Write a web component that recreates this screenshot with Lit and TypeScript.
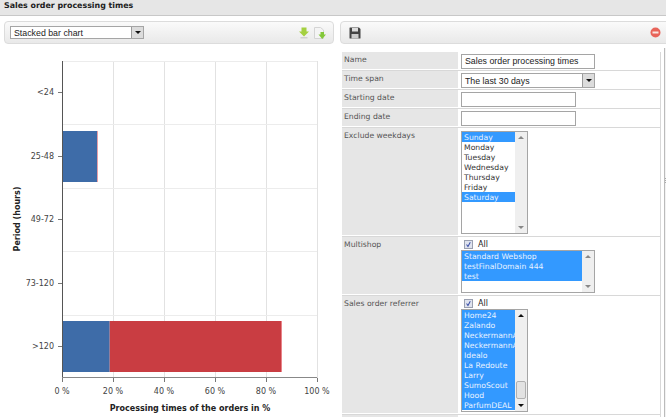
import {LitElement, html, css, svg} from "lit";
import {customElement} from "lit/decorators.js";

const rows = [
  {label: "<24", y: 92},
  {label: "25-48", y: 156},
  {label: "49-72", y: 219},
  {label: "73-120", y: 283},
  {label: ">120", y: 346},
];
const gridX = [62, 113, 164, 215, 266, 317];
const gridY = [61, 124, 188, 251, 315, 378];

@customElement("app-root")
export class AppRoot extends LitElement {
  static styles = css`
    :host {
      display: block;
      width: 666px;
      height: 417px;
      overflow: hidden;
      background: #fff;
      font-family: "DejaVu Sans", sans-serif;
      font-size: 7.7px;
      color: #555;
    }
    .title {
      height: 15px;
      padding: 0 0 0 4px;
      background: #e6e6e6;
      border-bottom: 1px solid #c8c8c8;
      font-weight: bold;
      font-size: 7.9px;
      line-height: 12px;
      color: #222;
    }
    .main {
      display: flex;
      padding-top: 5px;
    }
    .left {
      width: 340px;
      padding-left: 4px;
      box-sizing: border-box;
    }
    .right {
      flex: 1;
      min-width: 0;
    }
    .toolbar {
      height: 23px;
      box-sizing: border-box;
      border: 1px solid #dcdcdc;
      border-radius: 4px;
      background: linear-gradient(#fafafa, #e9e9e9);
      display: flex;
      align-items: center;
    }
    .left .toolbar {
      width: 330px;
      padding: 0 7px 0 5px;
    }
    .right .toolbar {
      padding: 0 8px 0 8px;
      margin-right: -4px;
    }
    .spacer { flex: 1; }
    .select {
      display: flex;
      align-items: center;
      box-sizing: border-box;
      border: 1px solid #a5a5a5;
      background: #fff;
      height: 13px;
      font-family: "Liberation Sans", sans-serif;
      font-size: 8.8px;
      color: #222;
      padding-left: 3px;
    }
    .select span { flex: 1; white-space: nowrap; }
    .select .btn {
      width: 11px;
      height: 100%;
      background: #dcdcdc;
      border-left: 1px solid #9a9a9a;
      display: flex;
      align-items: center;
      justify-content: center;
    }
    .arrow {
      width: 0;
      height: 0;
      border-left: 3px solid transparent;
      border-right: 3px solid transparent;
      border-top: 3px solid #111;
    }
    .chart-select { width: 134px; margin-right: auto; }
    .icon { display: block; flex: none; }
    .icon + .icon { margin-left: 4px; }
    .chart { display: block; margin-left: -4px; }
    .chart text { font-family: "DejaVu Sans", sans-serif; font-size: 8px; fill: #444; }
    .chart .axis-title { font-weight: bold; fill: #222; }
    .body {
      display: flex;
      margin-top: 4px;
    }
    .form {
      width: 318px;
      margin: 4px 0 0 2px;
      border-right: 1px solid #d8d8d8;
      flex: none;
    }
    .row {
      display: flex;
      border-bottom: 1px solid #d8d8d8;
      padding-bottom: 1px;
    }
    .label {
      width: 116px;
      flex: none;
      background: #e6e6e6;
      padding: 2px;
      box-sizing: border-box;
      line-height: 11px;
      color: #555;
    }
    .value {
      flex: 1;
      padding: 2px 0 0 3px;
      min-width: 0;
    }
    .value.tall { padding-bottom: 1px; }
    .input {
      box-sizing: border-box;
      height: 15px;
      border: 1px solid #a5a5a5;
      background: #fff;
      font-family: "Liberation Sans", sans-serif;
      font-size: 8.8px;
      line-height: 13px;
      color: #222;
      padding-left: 3px;
      white-space: nowrap;
    }
    .wide { width: 134px; }
    .narrow { width: 115px; }
    .select.wide { height: 15px; }
    .list {
      box-sizing: border-box;
      border: 1px solid #a5a5a5;
      display: flex;
      background: #fff;
      overflow: hidden;
    }
    .list.offset { margin-top: 1px; }
    .options {
      flex: 1;
      min-width: 0;
      overflow: hidden;
      line-height: 11px;
      color: #333;
    }
    .opt { height: 10px; padding-left: 2px; white-space: nowrap; }
    .opt.sel { background: #3399ff; color: #e8f2ff; }
    .bar {
      width: 12px;
      flex: none;
      background: #efefef;
      position: relative;
    }
    .bar i {
      position: absolute;
      left: 3px;
      width: 0;
      height: 0;
      border-left: 3px solid transparent;
      border-right: 3px solid transparent;
    }
    .bar .up { top: 4px; border-bottom: 3px solid #888; }
    .bar .down { bottom: 4px; border-top: 3px solid #888; }
    .bar.dark .up { border-bottom-color: #111; }
    .bar.dark .down { border-top-color: #111; }
    .thumb {
      position: absolute;
      left: 1px;
      right: 1px;
      bottom: 12px;
      height: 18px;
      background: #e2e2e2;
      border: 1px solid #b0b0b0;
      border-radius: 2px;
      box-sizing: border-box;
    }
    .all {
      display: flex;
      align-items: center;
      height: 11px;
      padding-left: 3px;
      color: #222;
      font-size: 8px;
      gap: 5px;
    }
    .check {
      width: 9px;
      height: 9px;
      box-sizing: border-box;
      border: 1px solid #9aa0b0;
      background: #dfe3ee;
      display: block;
    }
    .side {
      flex: 1;
      margin-left: 3px;
      border-left: 1px solid #bbb;
      background: #f2f2f2;
      display: flex;
      justify-content: flex-end;
      padding: 130px 0 0;
    }
    .dots {
      width: 1px;
      height: 5px;
      background: repeating-linear-gradient(#aaa 0 1px, transparent 1px 2px);
    }
    .next .label { height: 8px; }
  `;

  renderChart() {
    return html`<svg class="chart" width="340" height="373" viewBox="0 44 340 373">
      ${gridX.slice(1).map((x) => svg`<line x1=${x + 0.5} x2=${x + 0.5} y1="61" y2="378" stroke="#e2e2e2" />`)}
      ${gridY.slice(0, -1).map((y) => svg`<line x1="62" x2="317" y1=${y + 0.5} y2=${y + 0.5} stroke="#ececec" />`)}
      <rect x="62" y="131" width="35" height="51" fill="#3e6ca8" />
      <rect x="97" y="131" width="1" height="51" fill="#e8a0a8" />
      <rect x="62" y="321" width="47" height="51" fill="#3e6ca8" />
      <rect x="109" y="321" width="1" height="51" fill="#8e7f9f" />
      <rect x="110" y="321" width="171" height="51" fill="#c93d42" />
      <rect x="281" y="321" width="1" height="51" fill="#e9848a" />
      <line x1="62.5" x2="62.5" y1="61" y2="378" stroke="#555" />
      <line x1="62" x2="317" y1="377.5" y2="377.5" stroke="#888" />
      ${rows.map((r) => svg`
        <line x1="58" x2="62" y1=${r.y + 0.5} y2=${r.y + 0.5} stroke="#777" />
        <text x="54" y=${r.y + 3} text-anchor="end">${r.label}</text>`)}
      ${gridX.map((x, i) => svg`
        <line x1=${x + 0.5} x2=${x + 0.5} y1="378" y2="382" stroke="#777" />
        <text x=${x} y="394" text-anchor="middle">${i * 20} %</text>`)}
      <text x="20" y="219" text-anchor="middle" class="axis-title" transform="rotate(-90 20 219)">Period (hours)</text>
      <text x="190" y="411" text-anchor="middle" class="axis-title">Processing times of the orders in %</text>
    </svg>`;
  }

  renderList(items: string[], sel: string[], w: number, h: number, thumb = false, dark = false, offset = false) {
    return html`<div class="list ${offset ? "offset" : ""}" style="width:${w}px;height:${h}px">
      <div class="options">
        ${items.map((o) => html`<div class="opt ${sel.includes(o) ? "sel" : ""}">${o}</div>`)}
      </div>
      <div class="bar ${dark ? "dark" : ""}">
        <i class="up"></i>
        ${thumb ? html`<div class="thumb"></div>` : ""}
        <i class="down"></i>
      </div>
    </div>`;
  }

  render() {
    const days = ["Sunday", "Monday", "Tuesday", "Wednesday", "Thursday", "Friday", "Saturday"];
    const shops = ["Standard Webshop", "testFinalDomain 444", "test"];
    const refs = ["Home24", "Zalando", "NeckermannAT", "NeckermannAT", "Idealo", "La Redoute", "Larry", "SumoScout", "Hood", "ParfumDEAL"];
    const check = html`<svg class="check" viewBox="0 0 9 9"><path d="M2 4.5 L3.8 7 L6.8 1.5" fill="none" stroke="#3a4fa8" stroke-width="1.3" /></svg>`;
    return html`
      <div class="title">Sales order processing times</div>
      <div class="main">
        <div class="left">
          <div class="toolbar">
            <div class="select chart-select"><span>Stacked bar chart</span><div class="btn"><div class="arrow"></div></div></div>
            <svg class="icon" width="12" height="12" viewBox="0 0 12 12">
              <path d="M3.5 0.5 H8.5 V4.5 H11 L6 9.5 L1 4.5 H3.5 Z" fill="#a4d040" />
              <rect x="2.5" y="10" width="7" height="1.5" fill="#cfcfcf" />
            </svg>
            <svg class="icon" width="12" height="12" viewBox="0 0 12 12">
              <path d="M0.5 0.5 H6.5 L9.5 3 V11.5 H0.5 Z" fill="#f4f4f4" stroke="#d4d4d4" />
              <path d="M6.5 5 H10 V7.5 H12 L8.2 12 L4.5 7.5 H6.5 Z" fill="#84c83a" />
            </svg>
          </div>
          ${this.renderChart()}
        </div>
        <div class="right">
          <div class="toolbar">
            <svg class="icon" width="12" height="12" viewBox="0 0 12 12">
              <path d="M0.5 1 Q0.5 0.5 1 0.5 H10 L11.5 2 V11 Q11.5 11.5 11 11.5 H1 Q0.5 11.5 0.5 11 Z" fill="#444" />
              <rect x="3" y="1" width="6" height="3.5" fill="#ddd" />
              <rect x="2.5" y="7" width="7" height="4.5" fill="#ccc" />
            </svg>
            <div class="spacer"></div>
            <svg class="icon" width="11" height="11" viewBox="0 0 11 11">
              <circle cx="5.5" cy="5.5" r="5" fill="#e8645a" />
              <rect x="2.5" y="4.5" width="6" height="2" fill="#fbe6e0" />
            </svg>
          </div>
          <div class="body">
            <div class="form">
              <div class="row"><div class="label">Name</div><div class="value"><div class="input wide">Sales order processing times</div></div></div>
              <div class="row"><div class="label">Time span</div><div class="value">
                <div class="select wide"><span>The last 30 days</span><div class="btn"><div class="arrow"></div></div></div>
              </div></div>
              <div class="row"><div class="label">Starting date</div><div class="value"><div class="input narrow"></div></div></div>
              <div class="row"><div class="label">Ending date</div><div class="value"><div class="input narrow"></div></div></div>
              <div class="row"><div class="label">Exclude weekdays</div><div class="value tall">
                ${this.renderList(days, ["Sunday", "Saturday"], 67, 103, false, false, true)}
              </div></div>
              <div class="row"><div class="label">Multishop</div><div class="value tall">
                <div class="all">${check}All</div>
                ${this.renderList(shops, shops, 134, 43)}
              </div></div>
              <div class="row"><div class="label">Sales order referrer</div><div class="value tall">
                <div class="all">${check}All</div>
                ${this.renderList(refs, refs, 67, 103, true, true)}
              </div></div>
              <div class="next"><div class="label"></div></div>
            </div>
            <div class="side"><div class="dots"></div></div>
          </div>
        </div>
      </div>
    `;
  }
}
